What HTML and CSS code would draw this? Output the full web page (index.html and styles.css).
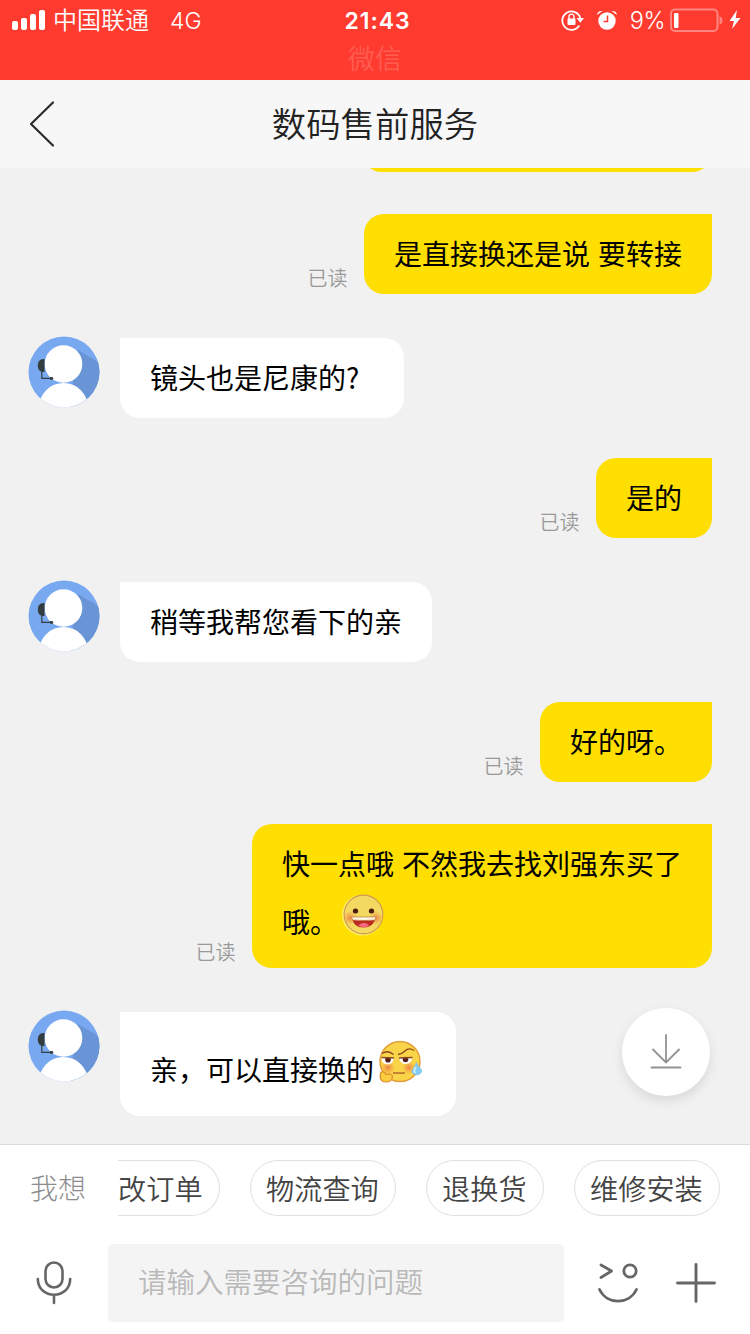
FILE: index.html
```html
<!DOCTYPE html>
<html lang="zh-CN">
<head>
<meta charset="utf-8">
<title>数码售前服务</title>
<link rel="stylesheet" href="styles.css">
</head>
<body>
<svg class="defs" width="0" height="0">
  <defs>
    <clipPath id="disc"><circle cx="36" cy="36" r="35.5"/></clipPath>
    <symbol id="agent" viewBox="0 0 72 72">
      <g clip-path="url(#disc)">
        <rect width="72" height="72" fill="#78a9f0"/>
        <path d="M50 14L72 27V72H42L45 45Z" fill="#6994d5"/>
        <circle cx="35.500" cy="71.500" r="24.500" fill="#fff"/>
        <circle cx="35.500" cy="28" r="18.800" fill="#fff"/>
        <path d="M16.500 23C12 22.500 9.800 25.500 9.800 29.500S12 36.500 16.500 36Z" fill="#343d40"/>
        <path d="M13.800 35V42.300H24" fill="none" stroke="#343d40" stroke-width="1.200"/>
        <ellipse cx="23.500" cy="42.500" rx="1.800" ry="1.400" fill="#343d40"/>
        <path d="M8 66.500Q36 76 64 66.500V72H8Z" fill="#fff"/>
      </g>
    </symbol>
    <radialGradient id="blush"><stop offset="0" stop-color="#ee7545" stop-opacity=".85"/><stop offset="1" stop-color="#f09048" stop-opacity="0"/></radialGradient>
  </defs>
</svg>
<div class="screen">
  <header class="status">
    <div class="status-left">
      <svg class="signal" width="34" height="20" viewBox="0 0 34 20" fill="#fff"><rect x="0" y="11" width="6" height="9" rx="2"/><rect x="9" y="8" width="6" height="12" rx="2"/><rect x="18" y="4" width="6" height="16" rx="2"/><rect x="27" y="0" width="6" height="20" rx="2"/></svg>
      <span class="carrier">中国联通</span><span class="network">4G</span>
    </div>
    <div class="status-center"><span class="clock">21:43</span><span class="app">微信</span></div>
    <div class="status-right">
      <svg width="24" height="22" viewBox="0 0 24 22"><path d="M18.300 16.500A9.200 9.200 0 1 1 19.300 9" fill="none" stroke="#fff" stroke-width="1.800"/><path d="M15.500 9H23L19.300 13.800Z" fill="#fff"/><rect x="6.500" y="9.500" width="8" height="6.500" rx="1" fill="#fff"/><path d="M8 10V7.600a2.500 2.500 0 0 1 5 0V10" fill="none" stroke="#fff" stroke-width="1.400"/></svg>
      <svg class="alarm" width="20" height="20" viewBox="0 0 20 20"><circle cx="10" cy="11" r="8.700" fill="#fff"/><path d="M0 5Q.5 .5 5.500 1ZM20 5Q19.500 .5 14.500 1Z" fill="#fff"/><path d="M10.500 5.500V11.500H6.500" fill="none" stroke="#ff3b30" stroke-width="1.500"/></svg>
      <span class="percent">9%</span>
      <svg class="battery" width="54" height="24" viewBox="0 0 54 24"><rect x="1" y="1.500" width="46.500" height="21.500" rx="4" fill="none" stroke="#ff867e" stroke-width="2"/><rect x="4" y="5" width="4.500" height="15" rx="1" fill="#fff"/><path d="M49.500 8.500Q52.500 9 52.500 12.500T49.500 16.500Z" fill="#ff867e"/></svg>
      <svg class="bolt" width="12" height="20" viewBox="0 0 12 20"><path d="M8 0L.5 11H5L3 19L11.500 8H6.700Z" fill="#fff"/></svg>
    </div>
  </header>
  <nav class="nav">
    <svg class="back" width="28" height="48" viewBox="0 0 28 48"><path d="M25 2.500L3 24L25 45.500" fill="none" stroke="#2b2b2b" stroke-width="2.200" stroke-linecap="round" stroke-linejoin="round"/></svg>
    <h1 class="title">数码售前服务</h1>
  </nav>
  <main class="chat">
    <div class="row mine previous"><div class="bubble"></div></div>
    <div class="row mine"><span class="read">已读</span><div class="bubble">是直接换还是说 要转接</div></div>
    <div class="row agent"><svg class="avatar"><use href="#agent"/></svg><div class="bubble question">镜头也是尼康的?</div></div>
    <div class="row mine after-agent"><span class="read">已读</span><div class="bubble">是的</div></div>
    <div class="row agent"><svg class="avatar"><use href="#agent"/></svg><div class="bubble">稍等我帮您看下的亲</div></div>
    <div class="row mine after-agent"><span class="read">已读</span><div class="bubble">好的呀。</div></div>
    <div class="row mine"><span class="read">已读</span><div class="bubble multi"><div>快一点哦 不然我去找刘强东买了</div><div class="line">哦。<svg class="grin" width="42" height="42" viewBox="0 0 42 42"><circle cx="20.500" cy="21" r="20.500" fill="#fff16c"/><circle cx="21.500" cy="20.500" r="19.400" fill="#f3d862" stroke="#cf9850" stroke-width="1.100"/><circle cx="8" cy="24" r="7" fill="url(#blush)"/><circle cx="34" cy="24" r="7" fill="url(#blush)"/><ellipse cx="13.500" cy="17" rx="2.700" ry="2.500" fill="#4b1d0c"/><ellipse cx="29.500" cy="17" rx="2.700" ry="2.500" fill="#4b1d0c"/><path d="M10 24H33.500Q31.500 33.500 21.500 33.500T10 24Z" fill="#bd2a20"/><path d="M16 31.500Q22 26 27.500 31.500Q22 35 16 31.500Z" fill="#f26881"/><path d="M9.500 23H34L33 26Q21.500 27 10.500 26Z" fill="#fff8e5" stroke="#b56d2e" stroke-width=".6"/></svg></div></div></div>
    <div class="row agent last"><svg class="avatar"><use href="#agent"/></svg><div class="bubble reply">亲，可以直接换的<svg class="smirk" width="44" height="44" viewBox="0 0 44 44"><circle cx="22" cy="21.500" r="20" fill="#f9d348" stroke="#e29a35" stroke-width="1.400"/><circle cx="10" cy="27.500" r="7" fill="url(#blush)"/><circle cx="31" cy="27.500" r="6.500" fill="url(#blush)"/><path d="M3.500 17.500L16 18Q15 24.500 9.500 24.500T3.500 17.500Z" fill="#fff"/><path d="M21 18L34.500 17.500Q33.500 24 28 24T21 18Z" fill="#fff"/><circle cx="10" cy="19.800" r="2.800" fill="#512018"/><circle cx="27.500" cy="19.500" r="2.800" fill="#512018"/><path d="M3.500 17.500L16 18M21 18L34.500 17.500M4 13.500Q10 9.500 15.500 14.500M20 14.500Q24 14 27 11Q31 7 36 10.500" fill="none" stroke="#8b471e" stroke-width="1.300"/><path d="M15 33H27" stroke="#b36a2a" stroke-width="1.500"/><path d="M3 32Q6.500 31 8 34.500Q14 33 14.500 36.500Q14 42 8 42Q0 41.500 3 32Z" fill="#fbce3f" stroke="#df8e30" stroke-width="1.200"/><path d="M38.500 22.500C37 27 34 29 34 31.500C34 36 43.500 36 43.500 31C43.500 28 40 27 38.500 22.500Z" fill="#83cbf3" stroke="#70bbe6" stroke-width=".6"/><path d="M38 27Q35 31 37.500 33" fill="none" stroke="#d9f4ff" stroke-width="1.500"/></svg></div></div>
    <button class="jump" aria-label="最新消息"><svg width="32" height="36" viewBox="0 0 32 36"><path d="M16 1V28M3 15.500L16 28.500L29 15.500M1.500 33.500H30.500" fill="none" stroke="#929292" stroke-width="1.800" stroke-linecap="round"/></svg></button>
  </main>
  <footer class="footer">
    <div class="quick"><span class="want">我想</span><div class="chips"><span class="chip clipped">改订单</span><span class="chip">物流查询</span><span class="chip">退换货</span><span class="chip">维修安装</span></div></div>
    <div class="composer">
      <svg class="mic" width="36" height="44" viewBox="0 0 36 44"><g fill="none" stroke="#666" stroke-width="2.600" stroke-linecap="round"><rect x="9.500" y="1.500" width="17" height="25" rx="8.500"/><path d="M1.800 18C2 39 34 39 34.200 18M18 34V42"/></g></svg>
      <div class="field">请输入需要咨询的问题</div>
      <svg class="wink" width="40" height="42" viewBox="0 0 40 42"><g fill="none" stroke="#666" stroke-width="2.800" stroke-linecap="round" stroke-linejoin="round"><path d="M3 3L13.500 9L3 15.500"/><circle cx="32" cy="9" r="6.200"/><path d="M1.500 27.500C9 43 31 43 38.500 27.500"/></g></svg>
      <svg class="plus" width="40" height="40" viewBox="0 0 40 40"><path d="M20 1.500V38.500M1.500 20H38.500" stroke="#666" stroke-width="2.900" stroke-linecap="round"/></svg>
    </div>
  </footer>
</div>
</body>
</html>
```
FILE: styles.css
```css
* { box-sizing: border-box; }
body { margin: 0; font-family: "Noto Sans CJK SC", sans-serif; color: #000; }
svg { display: block; flex: none; }
.defs { position: absolute; }
.screen { width: 750px; height: 1334px; display: flex; flex-direction: column; overflow: hidden; background: #f1f1f1; }
.status { height: 80px; background: #ff3b30; color: #fff; display: grid; grid-template-columns: 1fr 100px 1fr; flex: none; }
.status-left { display: flex; height: 40px; align-items: center; padding-left: 12px; font-size: 24px; font-weight: 350; }
.carrier { margin-left: 7px; line-height: 36px; padding-bottom: 2px; }
.network { margin-left: 21px; padding-top: 2px; font-family: Inter, sans-serif; font-size: 23px; }
.status-center { display: flex; flex-direction: column; align-items: center; white-space: nowrap; }
.clock { font: 600 23px/42px Inter, sans-serif; letter-spacing: .9px; margin-left: 5px; }
.app { font-size: 27px; line-height: 32px; font-weight: 350; color: #ff5d52; }
.status-right { display: flex; height: 40px; align-items: center; justify-content: flex-end; padding-right: 9px; }
.alarm { margin-left: 12px; }
.percent { margin-left: 13px; font: 350 23.5px/40px Inter, sans-serif; padding-top: 2px; letter-spacing: -.4px; }
.battery { margin-left: 5px; }
.bolt { margin-left: 5px; }
.nav { height: 88px; flex: none; background: #f7f7f7; display: grid; grid-template-columns: 100px 1fr 100px; align-items: center; }
.back { margin-left: 28px; }
.title { margin: 0; text-align: center; font-size: 34.4px; font-weight: 350; line-height: 84px; height: 88px; color: #222; }
.chat { height: 976px; flex: none; overflow: hidden; position: relative; padding: 0 38px 0 28px; }
.row { display: flex; }
.mine { justify-content: flex-end; align-items: flex-end; gap: 16px; margin-top: 42px; }
.mine.previous { margin-top: -76px; }
.previous .bubble { width: 350px; }
.mine.after-agent { margin-top: 40px; }
.agent { margin-top: 44px; gap: 20px; align-items: flex-start; }
.avatar { width: 72px; height: 72px; margin-top: -2px; }
.bubble { height: 80px; padding: 0 30px; font-size: 28px; line-height: 78px; white-space: nowrap; word-spacing: 1.7px; background: #fff; border-radius: 0 20px 20px 20px; }
.mine .bubble { background: #ffde02; border-radius: 20px 0 20px 20px; }
.question { width: 284px; }
.read { font-size: 20px; line-height: 30px; padding: 0 .5px 1px 0; font-weight: 350; color: #999; }
.mine .multi { height: 144px; }
.multi > div { line-height: 78px; height: 70px; }
.multi > .line { display: flex; line-height: 54px; height: 56px; }
.grin { margin: 0 0 0 4px; }
.reply { width: 336px; height: 104px; line-height: 114px; display: flex; }
.smirk { margin: 28px 0 0 4px; }
.jump { position: absolute; right: 40px; bottom: 48px; width: 88px; height: 88px; padding: 0; border: 0; border-radius: 50%; background: #fff; display: grid; place-items: center; box-shadow: 0 5px 12px rgba(0,0,0,.1); }
.footer { height: 190px; flex: none; background: #fff; border-top: 1px solid #dcdcdc; }
.quick { display: flex; align-items: center; height: 86px; padding-left: 30px; }
.want { width: 88px; flex: none; font-size: 28px; line-height: 42px; padding-bottom: 2px; font-weight: 300; color: #8d8d8d; }
.chips { display: flex; gap: 30px; overflow: hidden; }
.chip { flex: none; height: 56px; padding: 0 15px; border: 1px solid #e0e0e0; border-radius: 28px; font-size: 28.2px; line-height: 54px; font-weight: 350; color: #444; white-space: nowrap; }
.chip:nth-child(2), .chip:nth-child(4) { width: 146px; }
.chip:nth-child(3) { width: 118px; }
.chip.clipped { width: 102px; border-left: 0; border-radius: 0 28px 28px 0; padding-left: 0; }
.composer { display: flex; padding-left: 36px; height: 92px; align-items: center; margin-top: 6px; }
.field { width: 456px; height: 78px; margin-left: 36px; padding-left: 30px; border-radius: 5px; background: #f4f4f4; font-size: 28.5px; line-height: 74px; font-weight: 350; color: #b9b9b9; }
.wink { margin-left: 34px; }
.plus { margin-left: 38px; }
```
